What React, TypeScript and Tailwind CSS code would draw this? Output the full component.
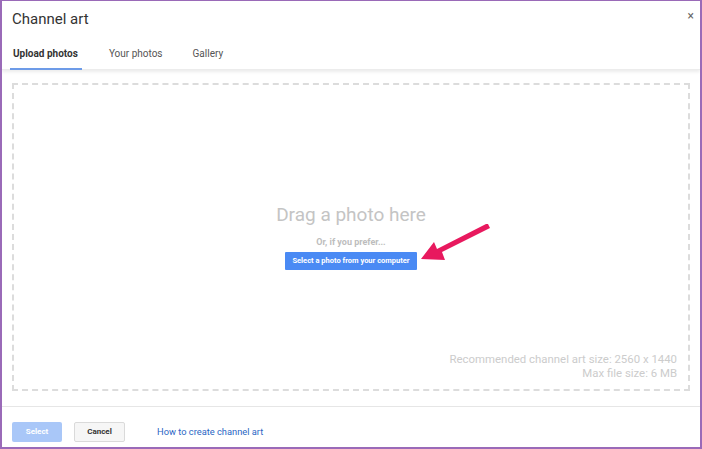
// Channel art upload dialog.

function PinkArrow() {
  return (
    <svg
      className="absolute left-[418px] top-[222px]"
      width="74"
      height="42"
      viewBox="0 0 74 42"
    >
      <path
        d="M68 1 L70 5 L22 29 L25 37 L1 36 L14 19 L17 26 L66 1 Z"
        fill="#e8195e"
      />
    </svg>
  );
}

export default function App() {
  return (
    <div
      className="relative w-[702px] h-[449px] bg-white flex flex-col border-x-2 border-b-2 border-t border-[#9a6ab8] overflow-hidden"
      style={{ fontFamily: "Roboto, 'Liberation Sans', sans-serif" }}
    >
      {/* header */}
      <div className="relative shadow-[0_2px_3px_rgba(0,0,0,0.08)] border-b border-[#ececec]">
        <div className="pl-[10px] pt-[7px] h-[34px] text-[15px] text-[#333]">
          Channel art
        </div>
        <button className="absolute right-[6px] top-[9px] text-[12px] text-[#666] leading-none">
          ×
        </button>
        <div className="flex items-end h-[34px] pl-[8px] text-[10px]">
          <div className="px-[3px] pt-[2px] h-full flex flex-col justify-center relative font-bold text-[#333]">
            Upload photos
            <div className="absolute left-0 right-[-1px] bottom-[-1px] h-[2px] bg-[#6d9be8]" />
          </div>
          <div className="ml-[28px] pt-[2px] h-full flex items-center text-[#555]">Your photos</div>
          <div className="ml-[30px] pt-[2px] h-full flex items-center text-[#555]">Gallery</div>
        </div>
      </div>

      {/* drop zone */}
      <div className="flex-1 px-[10px] pt-[13px] pb-[13px]">
        <div className="h-[308px] border-2 border-dashed border-[#dcdcdc] flex flex-col">
          <div className="flex-1 flex flex-col items-center pt-[120px]">
            <div className="text-[19px] text-[#c4c4c4] leading-none">Drag a photo here</div>
            <div className="mt-[12px] text-[9px] leading-[12px] font-bold text-[#bdbdbd]">Or, if you prefer...</div>
            <button className="mt-[4px] h-[18px] px-[7px] bg-[#4a8af4] text-white text-[7.5px] font-bold rounded-[1px]">
              Select a photo from your computer
            </button>
          </div>
          <div className="text-right pr-[11px] pb-[9px] text-[11.4px] leading-[14px] text-[#cccccc]">
            <div>Recommended channel art size: 2560 x 1440</div>
            <div>Max file size: 6 MB</div>
          </div>
        </div>
      </div>

      {/* footer */}
      <div className="border-t border-[#e6e6e6] h-[41px] flex items-start pl-[10px] pt-[15px]">
        <button className="w-[50px] h-[20px] bg-[#a9c7f8] text-white text-[8px] font-bold rounded-[2px]">
          Select
        </button>
        <button className="ml-[12px] w-[51px] h-[20px] bg-[#f6f6f6] border border-[#dadada] text-[#333] text-[8px] font-bold rounded-[2px]">
          Cancel
        </button>
        <a className="ml-[32px] leading-[20px] text-[9.3px] text-[#2a66c4]">How to create channel art</a>
      </div>

      <PinkArrow />
    </div>
  );
}
